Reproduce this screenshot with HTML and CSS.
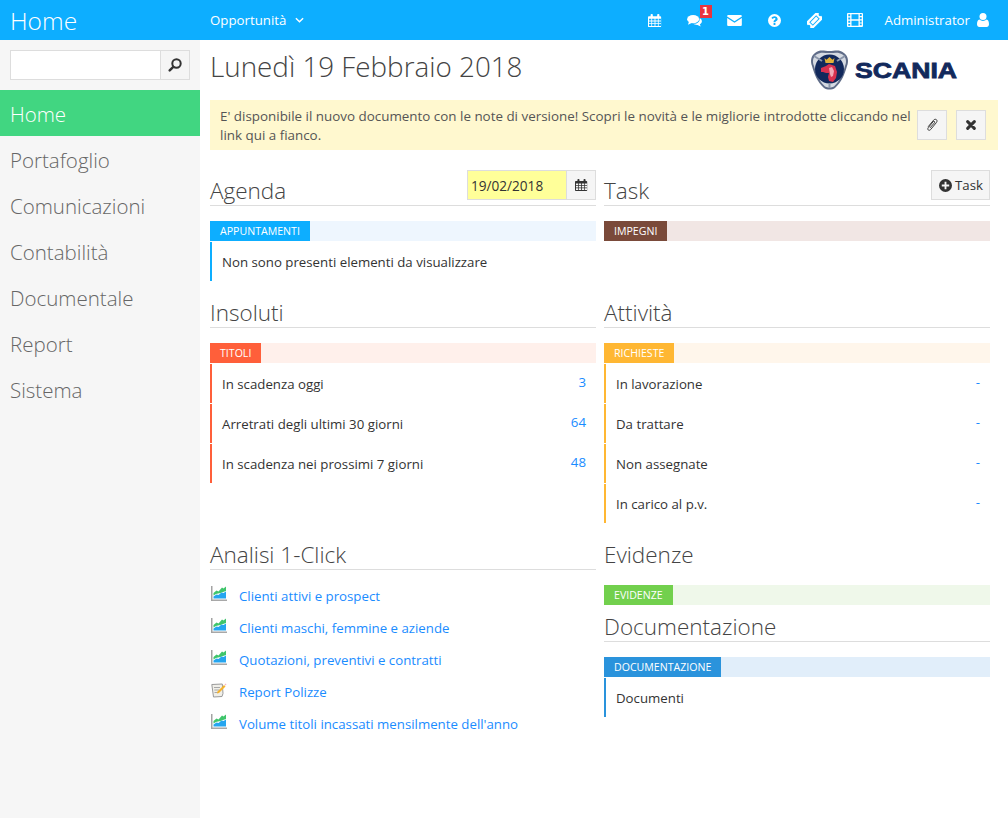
FILE: index.html
```html
<!DOCTYPE html>
<html lang="it">
<head>
    <meta charset="UTF-8">
    <meta name="viewport" content="width=device-width, initial-scale=1.0">
    <title>Home</title>
    <link rel="stylesheet" href="styles.css">
</head>
<body>
    <svg class="sprite" aria-hidden="true">
        <symbol id="i-cal" viewBox="0 0 16 16">
            <path fill-rule="evenodd" d="M1 3h2V1.500A1 1 0 0 1 4 .5h.5a1 1 0 0 1 1 1V3h5V1.500a1 1 0 0 1 1-1h.5a1 1 0 0 1 1 1V3h1a1 1 0 0 1 1 1v10.500a1 1 0 0 1-1 1H1a1 1 0 0 1-1-1V4a1 1 0 0 1 1-1zM1.200 6v2h2.600V6zm3.500 0v2h2.800V6zm3.800 0v2h2.800V6zm3.700 0v2h2.600V6zM1.200 9v2h2.600V9zm3.500 0v2h2.800V9zm3.800 0v2h2.800V9zm3.700 0v2h2.600V9zM1.200 12v2.300h2.600V12zm3.500 0v2.300h2.800V12zm3.800 0v2.300h2.800V12zm3.700 0v2.300h2.600V12z"/>
        </symbol>
        <symbol id="i-comments" viewBox="0 0 16 13">
            <ellipse cx="6.500" cy="4.500" rx="6.500" ry="4.500"/>
            <path d="M2 7l-1 3.500L6 8z"/>
            <path d="M14 3.500c1.300.9 2 2 2 3.200 0 1.400-.9 2.500-2.200 3.300l.9 2.500-3.400-1.800c-1.800.1-3.400-.3-4.500-1.200 4 .2 7.600-2 6.700-6z"/>
        </symbol>
        <symbol id="i-mail" viewBox="0 0 16 12">
            <path d="M0 1.200A1.200 1.200 0 0 1 1.200 0h13.600A1.200 1.200 0 0 1 16 1.200v.3L8 6.800 0 1.500z"/>
            <path d="M0 3.200l8 5.300 8-5.300v7.600a1.200 1.200 0 0 1-1.200 1.200H1.200A1.200 1.200 0 0 1 0 10.800z"/>
        </symbol>
        <symbol id="i-help" viewBox="0 0 14 14">
            <path fill-rule="evenodd" d="M7 0a7 7 0 1 1 0 14A7 7 0 0 1 7 0zM6 9.800v2h2v-2zM7 2.300C5.400 2.300 4.300 3.100 3.700 4.300l1.500 1.100c.4-.7.900-1.200 1.700-1.200.7 0 1.200.4 1.200.9 0 .6-.5.900-1.100 1.300C6.300 6.900 6 7.500 6 8.300V9h2v-.4c0-.5.400-.7 1-1.100.8-.5 1.400-1.200 1.400-2.200 0-1.700-1.600-3-3.400-3z"/>
        </symbol>
        <symbol id="i-ticket" viewBox="0 0 16 16">
            <g transform="rotate(-45 8 8)">
                <path fill-rule="evenodd" d="M-.5 3H16.500V6.500A1.500 1.500 0 0 0 16.500 9.500V13H-.5V9.500A1.500 1.500 0 0 0 -.5 6.500zM2.800 5.300V10.700H13.200V5.300z"/>
                <path d="M3.800 6.300h8.400v3.400H3.800z"/>
            </g>
        </symbol>
        <symbol id="i-film" viewBox="0 0 16 14">
            <path fill-rule="evenodd" d="M1 0h14a1 1 0 0 1 1 1v12a1 1 0 0 1-1 1H1a1 1 0 0 1-1-1V1a1 1 0 0 1 1-1zm.3 1.300v2h1.900v-2zm0 3.300v2h1.900v-2zm0 3.200v2h1.900v-2zm0 3.100v1.800h1.900v-1.800zm11.500-10v2h1.900v-2zm0 3.300v2h1.900v-2zm0 3.200v2h1.900v-2zm0 3.100v1.800h1.900v-1.800zM4.500 1.300v4.900h7V1.300zm0 6.400v5h7v-5z"/>
        </symbol>
        <symbol id="i-user" viewBox="0 0 12 14">
            <circle cx="6" cy="3.600" r="3.500"/>
            <path d="M2.400 6.600C3.400 7.500 4.600 8 6 8s2.600-.5 3.600-1.400C11.200 7 12 8.800 12 11.300c0 1.600-1 2.700-2.400 2.700H2.400C1 14 0 12.900 0 11.300 0 8.800.8 7 2.400 6.600z"/>
        </symbol>
        <symbol id="i-search" viewBox="0 0 14 14">
            <path fill="none" stroke="currentColor" stroke-width="2" d="M8.500 1.300a4.200 4.200 0 1 1 0 8.400 4.200 4.200 0 0 1 0-8.400z"/>
            <path fill="none" stroke="currentColor" stroke-width="2.400" stroke-linecap="round" d="M5.300 8.800l-3.600 3.600"/>
        </symbol>
        <symbol id="i-clip" viewBox="0 0 14 16">
            <path fill="none" stroke="currentColor" stroke-width="1.100" d="M2.500 10l6.300-7.600c1-1.200 2.500-1.400 3.400-.6.900.8.900 2.200-.1 3.400l-6.600 8c-.9 1.100-2.100 1.200-2.900.6-.7-.7-.7-1.800.1-2.800l5.600-6.800c.5-.6 1.200-.7 1.600-.3.500.4.400 1.100-.1 1.700L4.600 11.400"/>
        </symbol>
        <symbol id="i-close" viewBox="0 0 12 12">
            <path fill="none" stroke="currentColor" stroke-width="3.600" stroke-linecap="round" d="M2 2l8 8M10 2l-8 8"/>
        </symbol>
        <symbol id="i-plus" viewBox="0 0 14 14">
            <path fill-rule="evenodd" d="M7 0a7 7 0 1 1 0 14A7 7 0 0 1 7 0zM6 3v3H3v2h3v3h2V8h3V6H8V3z"/>
        </symbol>
        <symbol id="i-chart" viewBox="0 0 16 16">
            <path fill="#a3a3a3" d="M0 0h1.500v13.500H16V15H0z"/>
            <path fill="#d0d0d0" d="M1.500 13.500H16v.6H1.500z"/>
            <path fill="#3fc56b" d="M2.500 7l3-2.500 2 1L11 1.500l1.500 1L15 .5V5l-3 1-2.500 1-2.500.5-2 .5-2.500 1.500z"/>
            <path fill="#25a5ef" d="M2.500 10.500l3-2 2 .5 3-2.500 2 .5L15 5.500v7H2.500z"/>
        </symbol>
        <symbol id="i-report" viewBox="0 0 16 16">
            <path fill="#f0efe9" stroke="#9a9a9a" d="M.8 2.500l10.500-.5.700 9.500-1 3-8.500.5z"/>
            <path fill="none" stroke="#a8a8a8" d="M3 5.500h6M3.300 8h5M3.500 10.500h4"/>
            <path fill="#f5b32e" d="M6.500 9.500l6.500-6.500 1.500 1.500L8 11l-2 .5z"/>
            <path fill="#f7b6c8" d="M13.500 2.500l1-1 1 1-1 1z"/>
        </symbol>
    </svg>

    <header class="topbar">
        <div class="brand">Home</div>
        <div class="topnav">
            <a class="menu-link" href="#">Opportunità
                <svg class="chevron" viewBox="0 0 10 6"><path d="M1 1l4 4 4-4" fill="none" stroke="currentColor" stroke-width="1.600"/></svg>
            </a>
            <div class="tools">
                <span class="tool-slot"><svg class="tool tool-cal"><use href="#i-cal"/></svg></span>
                <span class="tool-slot">
                    <svg class="tool tool-comments"><use href="#i-comments"/></svg>
                    <span class="badge">1</span>
                </span>
                <span class="tool-slot"><svg class="tool tool-mail"><use href="#i-mail"/></svg></span>
                <span class="tool-slot"><svg class="tool tool-help"><use href="#i-help"/></svg></span>
                <span class="tool-slot"><svg class="tool tool-ticket"><use href="#i-ticket"/></svg></span>
                <span class="tool-slot"><svg class="tool tool-film"><use href="#i-film"/></svg></span>
                <a class="user" href="#">Administrator
                    <svg class="tool-user"><use href="#i-user"/></svg>
                </a>
            </div>
        </div>
    </header>

    <div class="layout">
        <aside class="sidebar">
            <div class="search">
                <input class="search-input" type="text" aria-label="Cerca">
                <button class="search-btn" aria-label="Cerca"><svg class="ico-search"><use href="#i-search"/></svg></button>
            </div>
            <nav class="side-menu">
                <a class="side-item active" href="#">Home</a>
                <a class="side-item" href="#">Portafoglio</a>
                <a class="side-item" href="#">Comunicazioni</a>
                <a class="side-item" href="#">Contabilità</a>
                <a class="side-item" href="#">Documentale</a>
                <a class="side-item" href="#">Report</a>
                <a class="side-item" href="#">Sistema</a>
            </nav>
        </aside>

        <main class="content">
            <div class="page-head">
                <h1>Lunedì 19 Febbraio 2018</h1>
                <svg class="logo" viewBox="0 0 150 44" role="img" aria-label="Scania">
                    <path d="M5 5C10 1 14 3 19.500 3S29 1 34 5C38 8 39 13 37 18 35 25 32 34 25 40 22 42 17 42 14 40 7 34 4 25 2 18 0 13 1 8 5 5z" fill="#5f6c88"/>
                    <path d="M6.500 6.500C10.500 3.500 14.500 5 19.500 5S28.500 3.500 32.500 6.500C36 9 37 13.500 35 18 33 25 30 33 24 38.500 21.500 40 17.500 40 15 38.500 9 33 6 25 4 18 2 13.500 3 9 6.500 6.500z" fill="#d5dae2"/>
                    <circle cx="19.500" cy="21" r="14.500" fill="#12295c"/>
                    <path d="M4 8l8 5M35 8l-8 5M19.500 40v-5" stroke="#8a95aa" stroke-width="2"/>
                    <path d="M14.500 10l2 1.800 3-2.800 3 2.800 2-1.800-1 5h-8z" fill="#e2b23a"/>
                    <path d="M11 20l5-2 3-2 6 2 2 6-1 6-3 4-4-1-1-4 1-4-3 0-3-1-2 0z" fill="#d9314f"/>
                    <path d="M19 20l3-1 2 4-1 5-2 1-1-3z" fill="#f1a9b7"/>
                    <text class="logo-text" x="45" y="30" textLength="102" lengthAdjust="spacingAndGlyphs">SCANIA</text>
                </svg>
            </div>

            <div class="notice">
                <p>E' disponibile il nuovo documento con le note di versione! Scopri le novità e le migliorie introdotte cliccando nel link qui a fianco.</p>
                <button class="square-btn" aria-label="Allegato"><svg class="ico-clip"><use href="#i-clip"/></svg></button>
                <button class="square-btn" aria-label="Chiudi"><svg class="ico-close"><use href="#i-close"/></svg></button>
            </div>

            <div class="dash">
                <section class="panel">
                    <div class="panel-head">
                        <h2>Agenda</h2>
                        <div class="date-field">
                            <input class="date-input" type="text" value="19/02/2018" aria-label="Data">
                            <button class="date-btn" aria-label="Calendario"><svg class="ico-cal"><use href="#i-cal"/></svg></button>
                        </div>
                    </div>
                    <div class="band band-blue"><span>APPUNTAMENTI</span></div>
                    <ul class="rows rows-blue">
                        <li>Non sono presenti elementi da visualizzare</li>
                    </ul>
                </section>

                <section class="panel">
                    <div class="panel-head">
                        <h2>Task</h2>
                        <button class="add-btn"><svg class="ico-plus"><use href="#i-plus"/></svg> Task</button>
                    </div>
                    <div class="band band-brown"><span>IMPEGNI</span></div>
                </section>

                <section class="panel">
                    <div class="panel-head"><h2>Insoluti</h2></div>
                    <div class="band band-red"><span>TITOLI</span></div>
                    <ul class="rows rows-red">
                        <li>In scadenza oggi <a class="num" href="#">3</a></li>
                        <li>Arretrati degli ultimi 30 giorni <a class="num" href="#">64</a></li>
                        <li>In scadenza nei prossimi 7 giorni <a class="num" href="#">48</a></li>
                    </ul>
                </section>

                <section class="panel">
                    <div class="panel-head"><h2>Attività</h2></div>
                    <div class="band band-orange"><span>RICHIESTE</span></div>
                    <ul class="rows rows-orange">
                        <li>In lavorazione <a class="num" href="#">-</a></li>
                        <li>Da trattare <a class="num" href="#">-</a></li>
                        <li>Non assegnate <a class="num" href="#">-</a></li>
                        <li>In carico al p.v. <a class="num" href="#">-</a></li>
                    </ul>
                </section>

                <section class="panel">
                    <div class="panel-head"><h2>Analisi 1-Click</h2></div>
                    <ul class="links">
                        <li><svg class="ico-link"><use href="#i-chart"/></svg><a href="#">Clienti attivi e prospect</a></li>
                        <li><svg class="ico-link"><use href="#i-chart"/></svg><a href="#">Clienti maschi, femmine e aziende</a></li>
                        <li><svg class="ico-link"><use href="#i-chart"/></svg><a href="#">Quotazioni, preventivi e contratti</a></li>
                        <li><svg class="ico-link"><use href="#i-report"/></svg><a href="#">Report Polizze</a></li>
                        <li><svg class="ico-link"><use href="#i-chart"/></svg><a href="#">Volume titoli incassati mensilmente dell'anno</a></li>
                    </ul>
                </section>

                <div class="stack">
                    <section class="panel">
                        <div class="panel-head panel-head-plain"><h2>Evidenze</h2></div>
                        <div class="band band-green"><span>EVIDENZE</span></div>
                    </section>
                    <section class="panel">
                        <div class="panel-head"><h2>Documentazione</h2></div>
                        <div class="band band-sky"><span>DOCUMENTAZIONE</span></div>
                        <ul class="rows rows-sky">
                            <li>Documenti</li>
                        </ul>
                    </section>
                </div>
            </div>
        </main>
    </div>
</body>
</html>
```

FILE: styles.css
```css
* {
    box-sizing: border-box;
}

body {
    margin: 0;
    font-family: "Open Sans", "Noto Sans", Arial, sans-serif;
    font-size: 13.25px;
    color: #333;
    background-color: white;
}

a {
    text-decoration: none;
}

.sprite {
    display: none;
}

.topbar {
    height: 40px;
    display: flex;
    background-color: #0daeff;
    color: white;
}

.brand {
    width: 200px;
    padding-left: 10px;
    font-size: 24.500px;
    font-weight: 300;
    line-height: 41px;
}

.topnav {
    flex: 1;
    display: flex;
    justify-content: space-between;
    align-items: center;
    padding: 0 19px 0 10px;
}

.menu-link {
    display: flex;
    align-items: center;
    gap: 9px;
    color: white;
}

.chevron {
    width: 9px;
    height: 6px;
}

.tools {
    display: flex;
    align-items: center;
}

.tool-slot {
    position: relative;
    width: 40px;
    display: flex;
    justify-content: center;
}

.tool {
    display: block;
    fill: white;
    height: 14px;
}

.tool-cal {
    width: 14px;
    height: 15px;
}

.tool-comments {
    width: 15px;
    height: 12px;
    margin-top: 1px;
}

.tool-mail {
    width: 15px;
    height: 11px;
}

.tool-help {
    width: 13px;
    height: 13px;
}

.tool-ticket {
    width: 15px;
    height: 15px;
}

.tool-film {
    width: 16px;
}

.badge {
    position: absolute;
    top: -9px;
    left: 25px;
    width: 12px;
    height: 13px;
    background-color: #e8343f;
    color: white;
    font-family: "DejaVu Sans", sans-serif;
    font-size: 10px;
    font-weight: bold;
    line-height: 13px;
    text-align: center;
}

.user {
    display: flex;
    align-items: center;
    gap: 7px;
    margin-left: 10px;
    color: white;
}

.tool-user {
    width: 12px;
    height: 14px;
    fill: white;
}

.layout {
    display: flex;
    min-height: 778px;
}

.sidebar {
    width: 200px;
    flex-shrink: 0;
    background-color: #f6f6f6;
}

.search {
    display: flex;
    height: 30px;
    margin: 10px 10px;
}

.search-input {
    flex: 1;
    min-width: 0;
    border: 1px solid #ddd;
    background: white;
}

.search-btn {
    width: 29px;
    padding: 0;
    border: 1px solid #ddd;
    border-left: none;
    background-color: #f5f5f5;
    color: #333;
}

.ico-search {
    display: block;
    width: 14px;
    height: 14px;
    margin: 0 auto;
}

.side-item {
    display: block;
    height: 46px;
    padding-left: 10px;
    font-size: 20.500px;
    font-weight: 300;
    line-height: 49px;
    color: #666;
}

.side-item.active {
    background-color: #41d681;
    color: white;
}

.content {
    flex: 1;
    padding: 0 10px;
}

.page-head {
    height: 60px;
    display: flex;
    justify-content: space-between;
}

h1 {
    margin: 5px 0 0;
    font-size: 27.800px;
    font-weight: 300;
    line-height: 42px;
    color: #444;
}

.logo {
    width: 150px;
    height: 44px;
    margin: 8px 38px 0 0;
}

.logo-text {
    font-family: "Liberation Sans", Arial, sans-serif;
    font-size: 22px;
    font-weight: bold;
    fill: #12295c;
    stroke: #12295c;
    stroke-width: 0.8;
}

.notice {
    height: 50px;
    display: flex;
    align-items: center;
    padding: 0 12px 0 10px;
    background-color: #fff8cf;
    font-size: 13.400px;
    color: #555;
    line-height: 19px;
}

.notice p {
    flex: 1;
    margin: 0 -5px 0 0;
    padding-top: 2px;
}

.square-btn {
    width: 30px;
    height: 30px;
    margin-left: 9px;
    padding: 0;
    border: 1px solid #ddd;
    background-color: #f5f5f5;
    color: #333;
}

.ico-clip {
    display: block;
    width: 12px;
    height: 14px;
    margin: 0 auto;
}

.ico-close {
    display: block;
    width: 10px;
    height: 10px;
    margin: 0 auto;
}

.dash {
    display: grid;
    grid-template-columns: 386px 386px;
    column-gap: 8px;
    row-gap: 10px;
    margin-top: 20px;
}

.panel-head {
    height: 36px;
    display: flex;
    justify-content: space-between;
    border-bottom: 1px solid #ddd;
}

.panel-head-plain {
    border-bottom: none;
}

h2 {
    margin: 0;
    font-size: 22.500px;
    font-weight: 300;
    line-height: 42px;
    color: #444;
}

.date-field {
    display: flex;
    height: 30px;
}

.date-input {
    width: 99px;
    padding: 0 3px;
    border: 1px solid #ddd;
    border-right: none;
    background-color: #ffff99;
    font: inherit;
    font-size: 13.600px;
    color: #333;
}

.date-btn {
    width: 30px;
    padding: 0;
    border: 1px solid #ddd;
    background-color: #f5f5f5;
}

.ico-cal {
    display: block;
    width: 13px;
    height: 14px;
    margin: 0 auto;
    fill: #333;
}

.add-btn {
    height: 30px;
    padding: 0 6px 0 7px;
    border: 1px solid #ddd;
    background-color: #f5f5f5;
    font: inherit;
    color: #333;
}

.ico-plus {
    width: 13px;
    height: 13px;
    vertical-align: -2px;
    fill: #333;
}

.band {
    height: 20px;
    margin: 15px 0 1px;
}

.band span {
    display: inline-block;
    height: 20px;
    padding: 0 10px;
    font-size: 10.600px;
    line-height: 21px;
    color: white;
}

.band-blue { background-color: #eef6fe; }
.band-blue span { background-color: #0daeff; }
.band-brown { background-color: #f1e6e4; }
.band-brown span { background-color: #7a4a3a; }
.band-red { background-color: #fff0eb; }
.band-red span { background-color: #ff5f3a; }
.band-orange { background-color: #fff6eb; }
.band-orange span { background-color: #ffb733; }
.band-green { background-color: #eff8ea; }
.band-green span { background-color: #72d04d; }
.band-sky { background-color: #e1eefa; }
.band-sky span { background-color: #2a93dc; }

.rows {
    margin: 0;
    padding: 0;
    list-style: none;
}

.rows li {
    height: 39px;
    display: flex;
    justify-content: space-between;
    margin-bottom: 1px;
    padding: 0 10px;
    border-left: 2px solid #ddd;
    line-height: 40px;
}

.rows-blue li { border-left-color: #0daeff; }
.rows-red li { border-left-color: #ff5f3a; }
.rows-orange li { border-left-color: #ffb733; }
.rows-sky li { border-left-color: #2a93dc; }

.num {
    line-height: 36px;
    color: #1a8cff;
}

.links {
    margin: 10px 0 0;
    padding: 0 0 0 1px;
    list-style: none;
}

.links li {
    height: 32px;
    display: flex;
    align-items: center;
}

.links a {
    margin-left: 12px;
    color: #1a8cff;
}

.ico-link {
    width: 16px;
    height: 16px;
    margin-top: -4px;
}
```
